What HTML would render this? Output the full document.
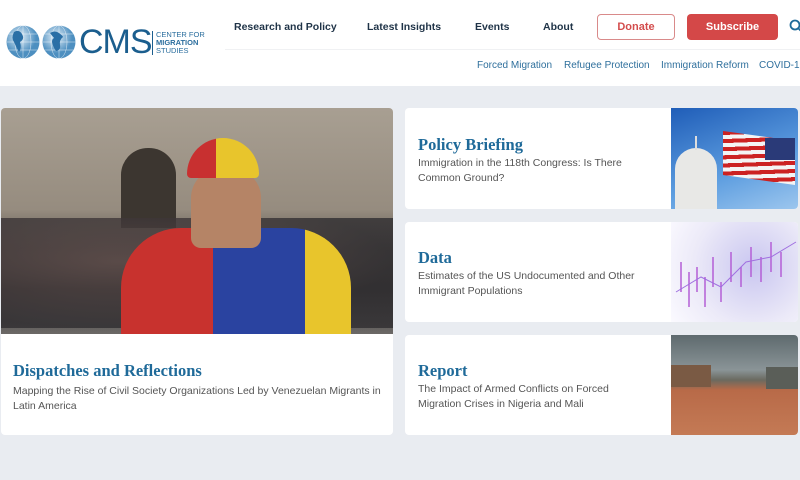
<!DOCTYPE html>
<html><head><meta charset="utf-8"><style>
*{margin:0;padding:0;box-sizing:border-box}
body{width:800px;height:480px;overflow:hidden;background:#e9ecf1;font-family:"Liberation Sans",sans-serif;position:relative}
.hdr{position:absolute;left:0;top:0;width:800px;height:86px;background:#fff}
.nav{position:absolute;top:21px;font-size:10.5px;font-weight:bold;color:#1f3347;white-space:nowrap}
.sub{position:absolute;top:60px;font-size:10px;color:#2e6f9c;white-space:nowrap}
.line{position:absolute;left:225px;top:49px;width:575px;height:1px;background:#f0f1f3}
.btn{position:absolute;top:14px;height:26px;border-radius:4px;font-size:11px;font-weight:bold;text-align:center;line-height:24px}
.card{position:absolute;background:#fff;border-radius:4px;overflow:hidden}
.ttl{font-family:"Liberation Serif",serif;font-weight:bold;color:#1f6a99;font-size:16.5px}
.desc{font-size:10.5px;color:#555;line-height:15px;margin-top:3px}
.img{position:absolute;right:0;top:0;width:127px;height:100%}
</style></head><body>
<div class="hdr">
<svg style="position:absolute;left:6px;top:24px" width="72" height="36" viewBox="0 0 72 36">
<defs><radialGradient id="g" cx="40%" cy="35%"><stop offset="0" stop-color="#e6f1f9"/><stop offset="1" stop-color="#4d8fc0"/></radialGradient></defs>
<circle cx="17" cy="18" r="16.5" fill="url(#g)"/><circle cx="53" cy="18" r="16.5" fill="url(#g)"/>
<g stroke="#fff" stroke-width=".5" fill="none" opacity=".8"><path d="M1 18h33M17 1v34M3 10h28M3 26h28M53 1v34M37 18h33M39 10h28M39 26h28"/><ellipse cx="17" cy="18" rx="8" ry="16.5"/><ellipse cx="53" cy="18" rx="8" ry="16.5"/></g>
<path d="M8 8q5-3 8 2t-2 8q2 6-1 10-3-5-5-10-3-4 0-10z M44 9q5-3 9 0t4 4q-4 3-3 8t-4 6q-3-4-4-9 0-3 2-4z" fill="#2a6fa6"/>
</svg>
<div style="position:absolute;left:79px;top:22px;font-size:34px;color:#1b5e8e;letter-spacing:-1px;line-height:40px">CMS</div>
<div style="position:absolute;left:152px;top:31px;border-left:1px solid #1b5e8e;padding-left:3px;font-size:7.5px;line-height:8px;color:#2b6e9e">CENTER FOR<br><b>MIGRATION</b><br>STUDIES</div>
<div class="nav" style="left:234px">Research and Policy</div>
<div class="nav" style="left:367px">Latest Insights</div>
<div class="nav" style="left:475px">Events</div>
<div class="nav" style="left:543px">About</div>
<div class="btn" style="left:597px;width:78px;border:1px solid #d98a8a;color:#d34d4d">Donate</div>
<div class="btn" style="left:687px;width:91px;background:#d44848;color:#fff;line-height:26px">Subscribe</div>
<svg style="position:absolute;left:789px;top:19px" width="14" height="14"><circle cx="6" cy="6" r="4.5" stroke="#1f6a99" stroke-width="1.8" fill="none"/><path d="M9.5 9.5l4 4" stroke="#1f6a99" stroke-width="1.8"/></svg>
<div class="line"></div>
<div class="sub" style="left:477px">Forced Migration</div>
<div class="sub" style="left:564px">Refugee Protection</div>
<div class="sub" style="left:661px">Immigration Reform</div>
<div class="sub" style="left:759px">COVID-19</div>
</div>

<div class="card" style="left:1px;top:108px;width:392px;height:327px">
<div style="position:absolute;left:0;top:0;width:392px;height:226px;background:linear-gradient(#a89f92 0,#968c7f 45%,#5a5550 62%,#3d3a38 80%,#6b6866 100%)">
<div style="position:absolute;left:120px;top:40px;width:55px;height:80px;background:#3c3630;border-radius:27px 27px 0 0"></div>
<div style="position:absolute;left:0;top:110px;width:392px;height:110px;background:radial-gradient(ellipse at 30% 40%,#5c4a48,#2f2d30 70%);opacity:.8"></div>
<div style="position:absolute;left:120px;top:120px;width:230px;height:106px;background:linear-gradient(90deg,#c8322e 0,#c8322e 40%,#2a43a0 40%,#2a43a0 80%,#e8c52c 80%);border-radius:60px 60px 0 0"></div>
<div style="position:absolute;left:190px;top:60px;width:70px;height:80px;background:#b58466;border-radius:30px 30px 10px 10px"></div>
<div style="position:absolute;left:186px;top:30px;width:72px;height:40px;background:linear-gradient(90deg,#c83030 40%,#e8c52c 40%);border-radius:36px 36px 4px 4px"></div>
</div>
<div style="position:absolute;left:12px;top:253px;width:375px">
<div class="ttl">Dispatches and Reflections</div>
<div class="desc">Mapping the Rise of Civil Society Organizations Led by Venezuelan Migrants in Latin America</div></div>
</div>

<div class="card" style="left:405px;top:108px;width:393px;height:101px">
<div style="position:absolute;left:13px;top:27px"><div class="ttl">Policy Briefing</div><div class="desc" style="margin-top:1px">Immigration in the 118th Congress: Is There<br>Common Ground?</div></div>
<div class="img" style="background:linear-gradient(160deg,#1f5db8,#5e9ee0 60%,#9cc6ee)">
<div style="position:absolute;left:4px;top:40px;width:42px;height:61px;background:#e8e8e6;border-radius:21px 21px 0 0"></div>
<div style="position:absolute;left:24px;top:28px;width:2px;height:14px;background:#ddd"></div>
<div style="position:absolute;left:52px;top:28px;width:72px;height:44px;background:repeating-linear-gradient(170deg,#c22 0 4px,#f4f4f4 4px 8px);transform:skewY(8deg)"></div>
<div style="position:absolute;left:94px;top:30px;width:30px;height:22px;background:#2a3a78"></div>
</div></div>

<div class="card" style="left:405px;top:222px;width:393px;height:100px">
<div style="position:absolute;left:13px;top:26px"><div class="ttl">Data</div><div class="desc" style="margin-top:1px">Estimates of the US Undocumented and Other<br>Immigrant Populations</div></div>
<div class="img" style="background:radial-gradient(circle at 65% 45%,#c9c6f0,#eceaf8 60%,#fbfaff)">
<svg width="127" height="100"><g stroke="#b45fd6" stroke-width="1.5"><path d="M10 40v30M18 50v35M26 45v25M34 55v30M42 35v30M50 60v20M60 30v30M70 45v20M80 25v30M90 35v25M100 20v30M110 30v25"/></g><path d="M5 70L30 55 50 65 75 40 100 35 125 20" stroke="#a070e0" fill="none"/></svg>
</div></div>

<div class="card" style="left:405px;top:335px;width:393px;height:100px">
<div style="position:absolute;left:13px;top:26px"><div class="ttl">Report</div><div class="desc" style="margin-top:1px">The Impact of Armed Conflicts on Forced<br>Migration Crises in Nigeria and Mali</div></div>
<div class="img" style="background:linear-gradient(#5e6a6e 0,#8a9497 35%,#6a6a60 45%,#b86a48 55%,#c47a55 100%)">
<div style="position:absolute;left:0;top:30px;width:40px;height:22px;background:#7a5a44"></div>
<div style="position:absolute;left:95px;top:32px;width:32px;height:22px;background:#5a5e58"></div>
</div></div>
</body></html>
